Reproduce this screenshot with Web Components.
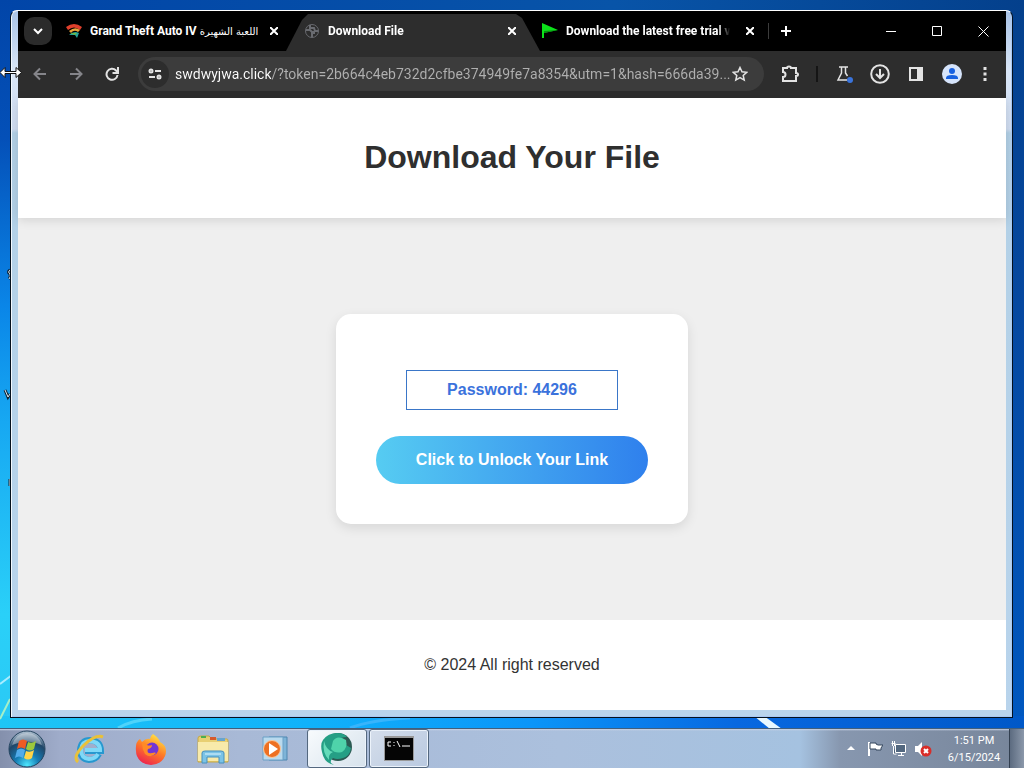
<!DOCTYPE html>
<html lang="en">
<head>
<meta charset="utf-8">
<meta name="viewport" content="width=device-width, initial-scale=1">
<title>Desktop</title>
<style>
html, body { margin: 0; height: 100%; }
body { font-family: Roboto, "Noto Sans", sans-serif; overflow: hidden; }
</style>
</head>
<body>
<desk-top></desk-top>

<template id="desk-top">
<style>
:host { display: grid; grid-template-rows: 1fr 40px; min-height: 100vh; position: relative; overflow: hidden;
  background:
    linear-gradient(90deg, #1fc6f5 0, #11b2fa 30%, #0b95f8 52%, #0868e0 72%, #0058c8 100%) 0 100% / 100% 52px no-repeat,
    linear-gradient(180deg, #0145a8 0, #0450b8 18%, #0a86e8 40%, #17a8f2 55%, #2ad0f8 80%, #2ac6f4 100%) 0 0 / 12px 100% no-repeat,
    linear-gradient(90deg, #0145a8 0, #0854a8 60%, #04408c 100%) 0 0 / 100% 12px no-repeat,
    linear-gradient(180deg, #04408c 0, #0648a0 40%, #0058c0 95%); }
.area { padding: 10px 11px; padding-left: 10px; display: grid; }
.rays { position: absolute; inset: 0; width: 100%; height: 100%; }
.icons, .cursor { position: absolute; left: 0; }
.icons { top: 264px; }
.cursor { top: 66px; }
app-window { position: relative; }
task-bar { position: relative; }
</style>
<svg class="rays" viewBox="0 0 1024 768" preserveAspectRatio="none" aria-hidden="true">
  <path d="M0 719 10 699" stroke="#a5f0c8" stroke-width="2"/>
  <path d="M0 684 12 675" stroke="#a8ecff" stroke-width="2"/>
  <path d="M118 728q14-8 34-9" stroke="#4fd3fa" stroke-width="3" fill="none"/>
  <path d="M350 728q20-8 60-10" stroke="#38b4fb" stroke-width="3" fill="none"/>
  <path d="M754 716 764 716 782 729 770 729Z" fill="#e8f8ff"/>
</svg>
<svg class="icons" width="10" height="230" viewBox="0 0 10 230" fill="none" aria-hidden="true">
  <path d="M10 6q-3 2 0 4 1 3-1 5M5 126l3 7 2-3M10 215v7" stroke="#123" stroke-width="3"/>
  <path d="M10 6q-3 2 0 4 1 3-1 5M5 126l3 7 2-3M10 215v7" stroke="#d8eaf5"/>
</svg>
<div class="area"><app-window></app-window></div>
<task-bar></task-bar>
<svg class="cursor" width="22" height="13" viewBox="0 0 22 13" aria-hidden="true">
  <path d="M0 6.5 5 1.500V5.500H16V1.500L21.500 6.500 16 11.500V7.500H5V11.500Z" fill="#fff" stroke="#111"/>
</svg>
</template>

<template id="app-window">
<style>
:host { display: grid; box-sizing: border-box; border: 1px solid #05111d; border-top-color: #fff; border-radius: 7px 7px 0 0; padding: 0 6px 7px 7px; overflow: hidden;
  background: linear-gradient(180deg, #a9c3e6 0, #d9e6f7 60px, #cfdcf0 118px, #b2d0e6 122px, #b9d4ec 100%); box-shadow: inset 1px 0 #f2f9ff, inset -1px -1px #a8c8f4; }
.body { display: flex; flex-direction: column; min-width: 0; background: #fff; }
download-page { flex: 1; }
</style>
<div class="body">
  <tab-strip></tab-strip>
  <nav-bar></nav-bar>
  <download-page></download-page>
</div>
</template>

<template id="tab-strip">
<style>
:host { display: flex; height: 40px; background: #000; color: #fff; align-items: stretch; }
button { border: 0; padding: 0; background: none; color: inherit; display: grid; place-items: center; }
.search { width: 28px; height: 28px; border-radius: 10px; background: #2b2b2b; margin: 6px 6px; }
.tabs { display: flex; flex: 0 1 714px; min-width: 0; }
browser-tab { flex: 1 1 0; min-width: 0; }
bdi { font: 400 10px "DejaVu Sans", sans-serif; }
.new { width: 28px; }
.controls { margin-left: auto; display: flex; }
.controls button { width: 46px; }
</style>
<button class="search" aria-label="Search tabs"><svg width="12" height="12" viewBox="0 0 12 12" fill="none" stroke="#fff" stroke-width="2"><path d="m2 4 4 4 4-4"/></svg></button>
<div class="tabs">
  <browser-tab>
    <svg slot="icon" width="16" height="16" viewBox="0 0 16 16" fill="none"><path d="M0 4Q8-2 16 4L14 7Q8 2 2 7Z" fill="#e0402c"/><path d="M3 8Q9 3 14 7L12 9Q8 6 5 10Z" fill="#e9a33c"/><path d="M3 12Q8 7 13 10L11 15 9 12Z" fill="#22a59a"/><path d="m4 10 7 0-2 2Z" fill="#73b944"/></svg>
    Grand Theft Auto IV <bdi lang="ar">اللعبة الشهيرة</bdi>
  </browser-tab>
  <browser-tab active>
    <svg slot="icon" width="16" height="16" viewBox="0 0 16 16" fill="none" stroke="#696b70"><circle cx="8" cy="8" r="6.500"/><path d="M2 7h4l2 2h2v1H8v4M6 2v3h4l1 3h3" stroke-width="2"/></svg>
    Download File
  </browser-tab>
  <browser-tab>
    <svg slot="icon" width="16" height="16" viewBox="0 0 16 16"><path d="M0 0 16 7 2 10V15H0Z" fill="#0ce21a"/><path d="M2 8 16 7 2 10Z" fill="#078d12"/></svg>
    Download the latest free trial version
  </browser-tab>
</div>
<button class="new" aria-label="New tab"><svg width="12" height="12" viewBox="0 0 12 12" stroke="#fff" stroke-width="2"><path d="M6 1v10M1 6h10"/></svg></button>
<div class="controls">
  <button aria-label="Minimize"><svg width="10" height="11" viewBox="0 0 10 11" stroke="#fff"><path d="M0 5.500h10"/></svg></button>
  <button aria-label="Maximize"><svg width="11" height="11" viewBox="0 0 11 11" fill="none" stroke="#fff"><path d="M.5.5h9v9h-9Z"/></svg></button>
  <button aria-label="Close"><svg width="11" height="11" viewBox="0 0 11 11" stroke="#fff"><path d="m.5.5 10 10M.5 10.500l10-10"/></svg></button>
</div>
</template>

<template id="browser-tab">
<style>
:host { display: flex; align-items: center; gap: 8px; box-sizing: border-box; padding: 0 14px 0 8px; position: relative; }
:host([active])::before { content: ""; position: absolute; inset: 3px -6px 0 -10px; background: #2d2d2d; clip-path: polygon(0 100%, 16px 6px, 22px 0, calc(100% - 24px) 0, calc(100% - 18px) 4px, 100% 100%); }
:host(:last-child)::after { content: ""; position: absolute; right: 3px; top: 12px; width: 1px; height: 16px; background: #3c3c3c; }
button { border: 0; padding: 0; background: none; color: inherit; font: inherit; position: relative; }
.tab { flex: 1; min-width: 0; display: flex; align-items: center; gap: 8px; }
.title { flex: 1; min-width: 0; overflow: hidden; white-space: nowrap; text-align: left; font-size: 12px; line-height: 20px; font-weight: 700; -webkit-mask: linear-gradient(90deg, #000 calc(100% - 16px), transparent calc(100% - 4px)); mask: linear-gradient(90deg, #000 calc(100% - 16px), transparent calc(100% - 4px)); }
:host(:first-child) .title { -webkit-mask: none; mask: none; }
.close { width: 16px; height: 16px; display: grid; place-items: center; }
::slotted(svg) { flex: none; display: block; }
</style>
<button class="tab"><slot name="icon"></slot><span class="title"><slot></slot></span></button>
<button class="close" aria-label="Close tab"><svg width="8" height="8" viewBox="0 0 8 8" stroke="#fff" stroke-width="2"><path d="m0 0 8 8M0 8l8-8"/></svg></button>
</template>

<template id="nav-bar">
<style>
:host { display: flex; align-items: center; gap: 8px; box-sizing: border-box; height: 47px; padding: 0 10px 2px 8px; background: #2d2d2d; color: #e3e3e3; }
button { border: 0; padding: 0; background: none; color: inherit; display: grid; place-items: center; width: 28px; height: 28px; flex: none; border-radius: 14px; }
svg { display: block; fill: none; stroke: currentColor; stroke-width: 2; }
svg.solid { stroke: none; }
svg.fine { stroke-width: 1.5; }
.dim { color: #85858a; }
.omnibox { flex: 1; min-width: 0; display: flex; align-items: center; height: 34px; box-sizing: border-box; margin: 0 4px; padding: 0 14px 0 3px; border-radius: 17px; background: #3c3c3c; }
.omnibox .info { background: #2d2d2d; margin-right: 6px; }
.omnibox .star { width: 20px; }
input { flex: 1; min-width: 0; border: 0; outline: 0; padding: 0; font: 14px/20px Roboto, "Noto Sans", sans-serif; height: 24px;
  background: linear-gradient(90deg, #fff 96px, #b0b0b0 96px); -webkit-background-clip: text; background-clip: text; -webkit-text-fill-color: transparent; color: #b0b0b0; }
.sep { width: 2px; height: 16px; background: #151515; margin: 0 4px; }
.labs { position: relative; }
.dot { position: absolute; right: 5px; bottom: 5px; }
.menu { width: 22px; }
</style>
<button class="dim" aria-label="Back"><svg width="14" height="14" viewBox="0 0 14 14"><path d="M13 7H2M7 1.500 1.500 7 7 12.500"/></svg></button>
<button class="dim" aria-label="Forward"><svg width="14" height="14" viewBox="0 0 14 14"><path d="M1 7h11M7 1.500 12.500 7 7 12.500"/></svg></button>
<button aria-label="Reload"><svg width="14" height="14" viewBox="0 0 14 14"><path d="M12.500 8A5.500 5.500 0 1 1 11 3.500L12.500 5"/><path d="M13 0v6H7.500" /></svg></button>
<div class="omnibox">
  <button class="info" aria-label="Site information"><svg width="14" height="12" viewBox="0 0 14 12"><circle cx="3" cy="3" r="1.500"/><path d="M7 3h6M1 9h6"/><circle cx="11" cy="9" r="1.500"/></svg></button>
  <input type="text" aria-label="Address" spellcheck="false" value="swdwyjwa.click/?token=2b664c4eb732d2cfbe374949fe7a8354&amp;utm=1&amp;hash=666da39...">
  <button class="star" aria-label="Bookmark this page"><svg class="fine" width="16" height="16" viewBox="0 0 16 16"><path d="m8 1.500 2 4.300 4.700.5-3.500 3.200 1 4.600L8 11.700l-4.200 2.400 1-4.600L1.300 6.300 6 5.800Z"/></svg></button>
</div>
<button aria-label="Extensions"><svg width="18" height="18" viewBox="0 0 18 18"><path d="M2 3h4q0-1.500 2-1.500T10 3h5v5q2 0 2 1.500T15 11v5H2v-4q2.500 0 2.500-2.500T2 7Z"/></svg></button>
<span class="sep"></span>
<button class="labs" aria-label="Labs"><svg class="fine" width="18" height="18" viewBox="0 0 18 18"><path d="M4 2h9M6.500 2v6L3 15h9M10.500 2v6l2 3"/></svg><svg class="solid dot" width="6" height="6" viewBox="0 0 6 6"><circle cx="3" cy="3" r="3" fill="#3a74dc"/></svg></button>
<button aria-label="Downloads"><svg width="20" height="20" viewBox="0 0 20 20"><circle cx="10" cy="10" r="8.800"/><path d="M10 5v9M6 10l4 4 4-4"/></svg></button>
<button aria-label="Side panel"><svg width="16" height="16" viewBox="0 0 16 16"><path d="M2 2h12v12H2Z"/><path d="M10 2h4v12h-4Z" fill="currentColor"/></svg></button>
<button aria-label="Profile"><svg class="solid" width="20" height="20" viewBox="0 0 20 20"><circle cx="10" cy="10" r="10" fill="#d6e4fb"/><circle cx="10" cy="7" r="3" fill="#1660e0"/><path d="M4 15v-1q0-3 6-3t6 3v1Z" fill="#1660e0"/></svg></button>
<button class="menu" aria-label="Menu"><svg class="solid" width="4" height="16" viewBox="0 0 4 16"><path d="M.5 1h3v3h-3ZM.5 6.500h3v3h-3ZM.5 12h3v3h-3Z" fill="currentColor"/></svg></button>
</template>

<template id="download-page">
<style>
:host { display: flex; flex-direction: column; font: 16px/24px "Liberation Sans", Arial, sans-serif; color: #333; background: #efefef; }
header { background: #fff; padding: 39px 20px 41px; text-align: center; box-shadow: 0 2px 10px rgba(0, 0, 0, .12); }
h1 { margin: 0; font-size: 32px; line-height: 40px; color: #2f2f2f; }
main { flex: 1; display: grid; place-items: center; }
footer { background: #fff; padding: 32px 20px; text-align: center; line-height: 26px; }
p { margin: 0; }
</style>
<header><h1>Download Your File</h1></header>
<main><unlock-card password="44296"></unlock-card></main>
<footer><p>© 2024 All right reserved</p></footer>
</template>

<template id="unlock-card">
<style>
:host { display: flex; flex-direction: column; align-items: center; gap: 26px; padding: 56px 40px 40px; border-radius: 15px; background: #fff; box-shadow: 0 4px 12px rgba(0, 0, 0, .1); }
p { margin: 0; border: 1px solid #3a76c8; padding: 7px 40px; font-weight: 700; color: #3b72dc; line-height: 24px; }
button { border: 0; border-radius: 24px; padding: 12px 40px; font: inherit; font-weight: 700; line-height: 24px; color: #fff; background: linear-gradient(90deg, #56ccf2, #2f80ed); }
</style>
<p>Password: <span id="code"></span></p>
<button>Click to Unlock Your Link</button>
</template>

<template id="task-bar">
<style>
:host { display: flex; align-items: stretch; box-sizing: border-box; border-top: 1px solid #425f7c; color: #fff;
  background: linear-gradient(180deg, #c8d2e6 0, transparent 2px), linear-gradient(90deg, #8490ac 0, #9facca 60px, #a8b9d6 240px, #abc0dd 560px, #a5c2e0 800px, #8797af 840px, #77859a 100%); }
button { border: 0; padding: 0; background: none; color: inherit; font: inherit; display: grid; place-items: center; }
.start { width: 54px; margin-right: 5px; }
.apps { display: flex; gap: 2px; }
.tray { margin-left: auto; display: flex; align-items: center; }
.tray button { width: 24px; height: 39px; }
.clock { width: 70px; font-size: 11px; line-height: 17px; text-align: center; margin-left: 4px; }
.clock time { display: block; }
.tray .show { width: 15px; background: linear-gradient(90deg, #5c6b80, #8b98aa); border-left: 1px solid #323f50; }
svg { display: block; }
</style>
<button class="start" aria-label="Start"><svg width="38" height="38" viewBox="0 0 38 38"><defs><radialGradient id="orb" cx=".5" cy=".95" r=".95"><stop offset="0" stop-color="#4ee8ff"/><stop offset=".35" stop-color="#157cb4"/><stop offset=".7" stop-color="#204668"/><stop offset="1" stop-color="#b8c9d8"/></radialGradient></defs><circle cx="19" cy="19" r="18" fill="url(#orb)" stroke="#24445f"/><path d="M4 15Q8 3 19 3t15 12q-15-7-30 0" fill="#fff" opacity=".35"/><path d="M11 11q4-3 8 0l-2 8q-4-3-8 0Z" fill="#ee5b24"/><path d="M20 12q4 2 8-1l-2 8q-4 3-8 0Z" fill="#9cc83c"/><path d="M9 20q4-3 8 0l-2 8q-4-3-8 0Z" fill="#51abea"/><path d="M18 21q4 2 8-1l-2 8q-4 3-8 0Z" fill="#ffd447"/></svg></button>
<div class="apps">
<task-button label="Internet Explorer"><svg width="32" height="32" viewBox="0 0 32 32" fill="none"><path d="M26 21Q23 27 16 27 7 26 7 17 8 7 17 7 28 8 28 18H12" stroke="#2798cf" stroke-width="6"/><path d="M25 21Q22 26 16 26 8 25 8 17 9 8 17 8 27 9 27 17H12" stroke="#7fd8f7" stroke-width="4"/><path d="M5 29Q-1 24 11 12 23 1 30 4" stroke="#e9c13a" stroke-width="3"/></svg></task-button>
<task-button label="Firefox"><svg width="32" height="32" viewBox="0 0 32 32"><defs><linearGradient id="fx" x1=".8" y1="0" x2=".3" y2="1"><stop stop-color="#fff04a"/><stop offset=".5" stop-color="#ff7d25"/><stop offset="1" stop-color="#ed2150"/></linearGradient></defs><path d="M18 1q6 4 7 8 6 3 6 9a15 14 0 0 1-30 0Q0 9 5 6l2 3q4-4 8-3Q15 3 18 1" fill="url(#fx)"/><circle cx="17" cy="16" r="6.500" fill="#7236d5"/><path d="M7 10q4 0 5 2 2 1 5 0 0 3-4 4-2 5 4 4 3-1 4 0-5 6-11 1-3-5-3-11" fill="#ff8a26"/></svg></task-button>
<task-button label="Windows Explorer"><svg width="32" height="32" viewBox="0 0 32 32"><path d="M1 5q0-2 3-2h8l3 3h15q1 0 1 2v21H1Z" fill="#e8cf72" stroke="#c5a846"/><path d="M4 3h5v2H4Z" fill="#4caf50"/><path d="M13 4h6v3h-6Z" fill="#d65a2d"/><path d="M20 5h8v3h-8Z" fill="#68a5ce"/><path d="M1 9h30v19H1Z" fill="#f8eaaa"/><path d="M5 30V20q0-2 3-2h16q3 0 3 2v10h-5v-6H10v6Z" fill="#7bc3e6" stroke="#478fbd"/><path d="M8 21h16" stroke="#e0f5ff"/></svg></task-button>
<task-button label="Media Player"><svg width="28" height="28" viewBox="0 0 28 28"><path d="M8 2h18v23H8Z" fill="#7eb4d8" stroke="#4e86b0"/><path d="M2 2h20v23H2Z" fill="#b9daee" stroke="#6aa0c6"/><circle cx="11" cy="14" r="8.500" fill="#ed7022" stroke="#f9c79c"/><path d="M8 8v12l9-6Z" fill="#fff"/></svg></task-button>
<task-button label="Download Manager" active><svg width="34" height="34" viewBox="0 0 34 34"><circle cx="18" cy="15" r="14" fill="#2c5a53"/><path d="M3 8Q8 1 17 1q7 0 10 4-6 0-9 3l13 8q-1 8-8 10-6 2-10 0-3 2-2 5l3 2Q4 31 2 20 0 12 3 8" fill="#259f85"/><path d="M13 9q3-5 9-3l4 2q2 8-4 12-7 2-11-3Z" fill="#4fd3aa"/><path d="M4 9q2 9 9 11-5 2-4 8-7-7-5-19" fill="#64dbb9"/></svg></task-button>
<task-button label="Command Prompt" open><svg width="30" height="26" viewBox="0 0 30 26"><path d="M0 0h30v25H0Z" fill="#999"/><path d="M1 2h28v22H1Z" fill="#050505"/><path d="M7 6H4v4h3M10 6v1M10 9v1M13 5l3 6M18 10h8" fill="none" stroke="#fff"/></svg></task-button>
</div>
<div class="tray">
  <button aria-label="Show hidden icons"><svg width="8" height="5" viewBox="0 0 8 5"><path d="m0 4 4-4 4 4Z" fill="#fff"/></svg></button>
  <button aria-label="Action Center"><svg width="16" height="16" viewBox="0 0 16 16"><path d="M1 1h2v14H1Z" fill="#fff"/><path d="M3 2h6v1l2 1h5l-2 3 0 2H9V8H3Z" fill="#fff" stroke="#34465c"/></svg></button>
  <button aria-label="Network"><svg width="16" height="16" viewBox="0 0 16 16" fill="#52677f" stroke="#fff"><path d="M4.500 3.500h10v8h-10ZM7 14.500h6M10.500 12v2M.5 2.500h4M1.500 0v5M3.500 0v5M2.500 5v8h3"/></svg></button>
  <button aria-label="Volume muted"><svg width="18" height="16" viewBox="0 0 18 16"><path d="M1 5h3l4-4v14l-4-4H1Z" fill="#fff"/><circle cx="12" cy="10" r="5.500" fill="#d92d28"/><path d="m10 8 4 4M10 12l4-4" stroke="#fff" stroke-width="2"/></svg></button>
  <div class="clock"><time>1:51 PM</time><time>6/15/2024</time></div>
  <button class="show" aria-label="Show desktop"></button>
</div>
</template>

<template id="task-button">
<style>
:host { display: block; width: 60px; }
button { box-sizing: border-box; width: 100%; height: 39px; padding: 0; border: 1px solid transparent; background: none; display: grid; place-items: center; }
:host([active]) button, :host([open]) button { border-color: #54687f; border-radius: 3px; box-shadow: inset 0 0 0 1px #ecf3fb; background: linear-gradient(135deg, #d5deeb, #b9c9e0); }
:host([active]) button { background: linear-gradient(135deg, #f8fbfd, #d6e2ec); }
</style>
<button><slot></slot></button>
</template>

<script>
class TemplateElement extends HTMLElement {
  constructor() {
    super();
    const source = document.getElementById(this.localName);
    this.attachShadow({ mode: "open" }).append(source.content.cloneNode(true));
  }
}
class TaskButton extends TemplateElement {
  connectedCallback() {
    this.shadowRoot.querySelector("button").setAttribute("aria-label", this.getAttribute("label"));
  }
}
class UnlockCard extends TemplateElement {
  connectedCallback() {
    this.shadowRoot.getElementById("code").textContent = this.getAttribute("password");
  }
}
customElements.define("task-button", TaskButton);
customElements.define("unlock-card", UnlockCard);
for (const name of ["browser-tab", "tab-strip", "nav-bar", "download-page", "app-window", "task-bar", "desk-top"]) {
  customElements.define(name, class extends TemplateElement {});
}
</script>
</body>
</html>
